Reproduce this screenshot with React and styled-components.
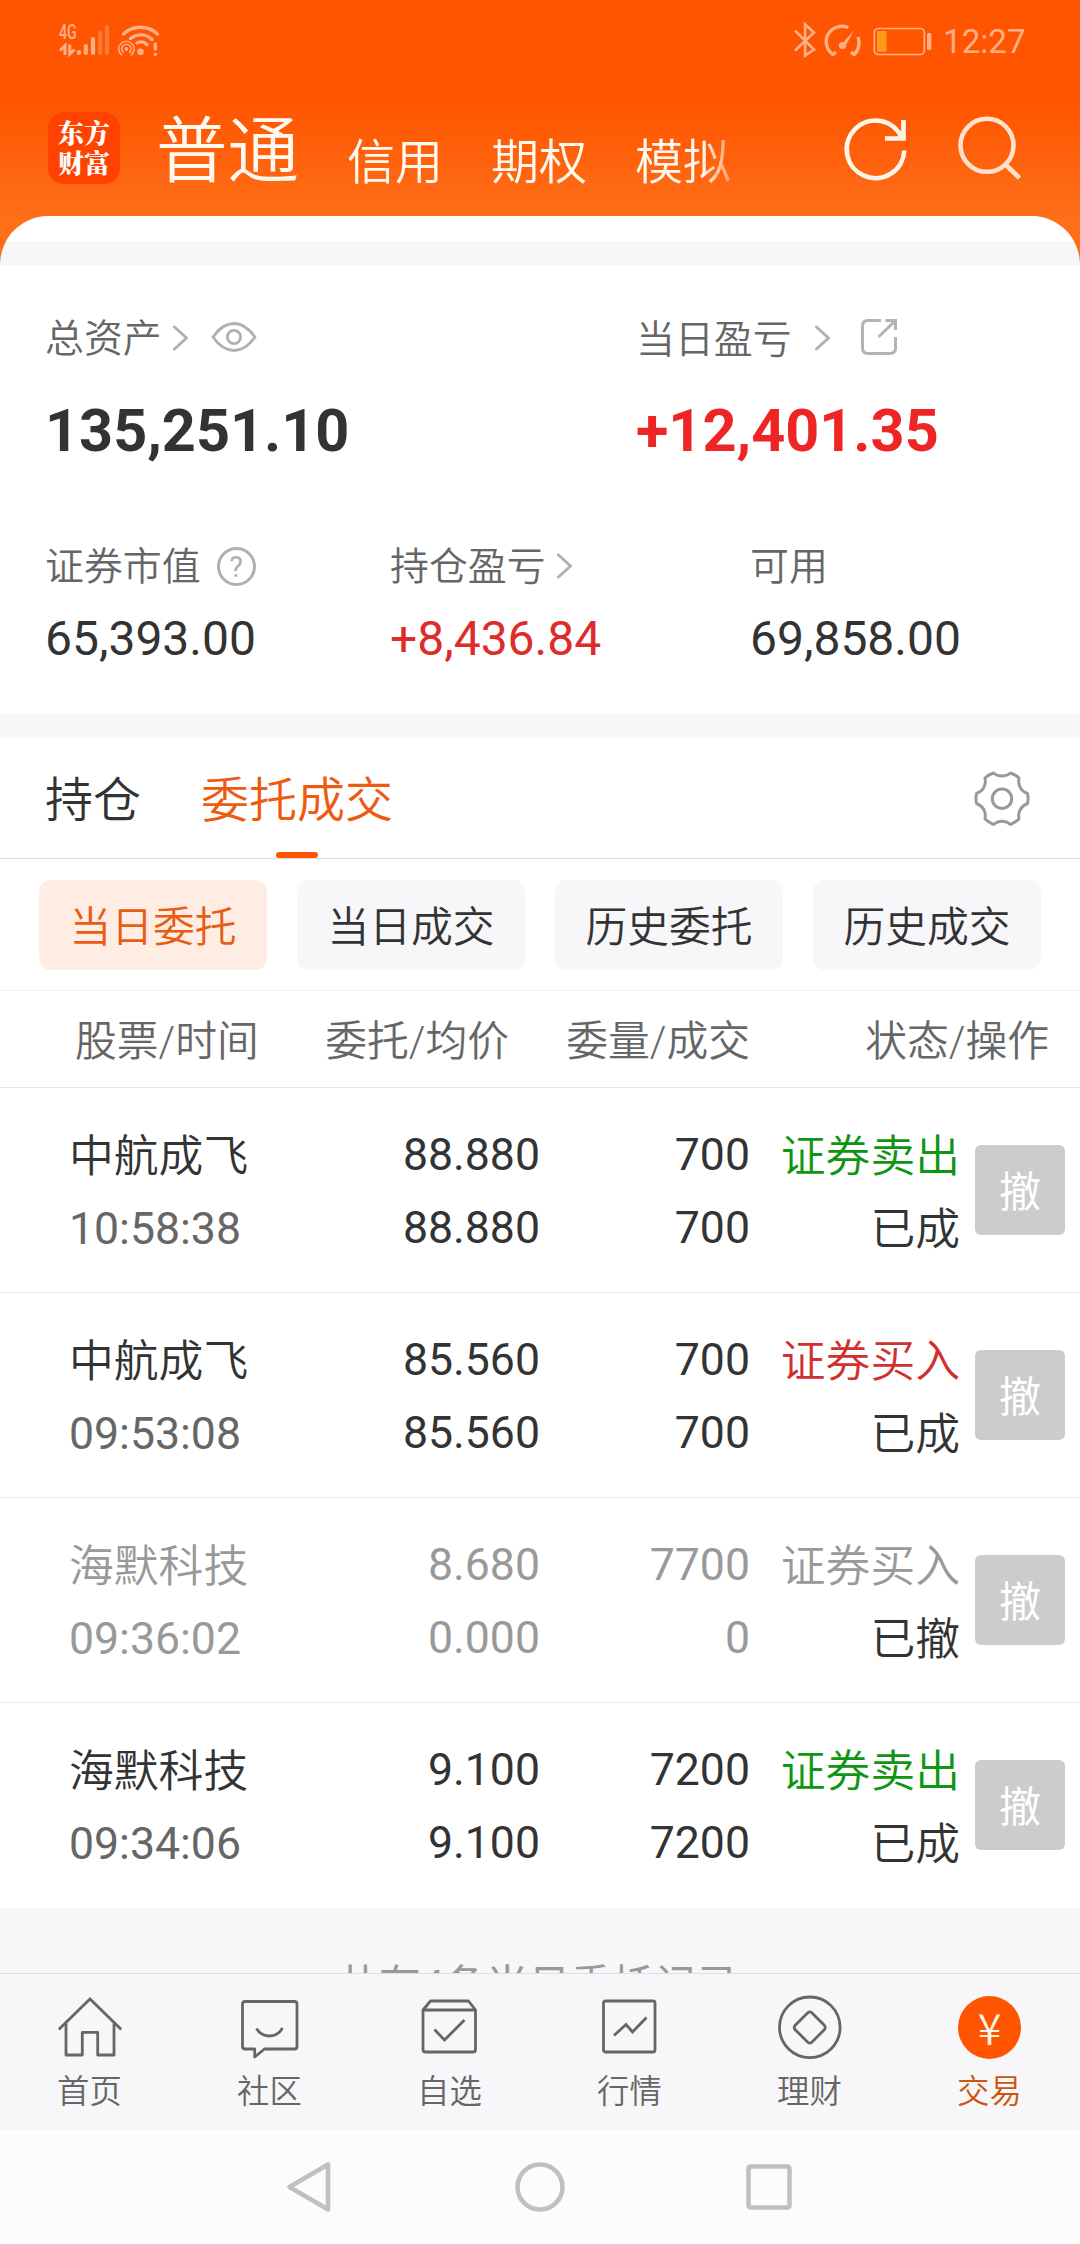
import React from "react";
import styled, { createGlobalStyle } from "styled-components";

const Global = createGlobalStyle`
  * { box-sizing: border-box; }
  body { margin: 0; background: #fff; }
  svg { display: block; flex: none; }
`;

const Screen = styled.div`
  width: 1080px;
  height: 2244px;
  display: flex;
  flex-direction: column;
  overflow: hidden;
  background: linear-gradient(#ff5500 100px, #ff6f1a 220px);
  font-family: Roboto, "Noto Sans CJK SC", sans-serif;
  color: #333;
  white-space: nowrap;
`;

const StatusBar = styled.div`
  height: 80px;
  flex: none;
  display: flex;
  align-items: flex-start;
  justify-content: space-between;
  padding: 20px 55px 0 56px;
  color: #ffb088;
`;
const StatusSide = styled.div`
  display: flex;
  align-items: flex-start;
`;
const Network = styled.span`
  width: 0;
  font-size: 21px;
  font-weight: 500;
  line-height: 24px;
  transform: translate(3px, 0) scaleX(0.68);
  transform-origin: 0 50%;
`;
const Clock = styled.span`
  width: 82px;
  margin-left: 10px;
  font-size: 33.2px;
  line-height: 43px;
`;

const Header = styled.header`
  height: 136px;
  flex: none;
  display: flex;
  align-items: flex-start;
  padding: 32px 57px 0 48px;
  color: #fff9f0;
`;
const Logo = styled.div`
  width: 72px;
  height: 72px;
  display: flex;
  flex-direction: column;
  align-items: center;
  gap: 4px;
  padding-top: 7px;
  border-radius: 16px;
  background: #ff4200;
  color: #fff;
  font-family: "Noto Serif CJK SC", "Noto Sans CJK SC", sans-serif;
  font-size: 26px;
  font-weight: 900;
  line-height: 26px;
`;
const AccountTabs = styled.nav`
  width: 596px;
  height: 82px;
  margin-left: 36px;
  display: flex;
  align-items: flex-end;
  gap: 48px;
  mask-image: linear-gradient(90deg, #000 546px, transparent 592px);
`;
const AccountTab = styled.span`
  font-size: ${(p) => (p.$active ? 71.5 : 48)}px;
  line-height: ${(p) => (p.$active ? 84 : 62)}px;
  font-weight: 350;
`;
const HeaderIcons = styled.div`
  display: flex;
  gap: 48px;
  margin: 3px 0 0 auto;
`;

const Sheet = styled.main`
  flex: 1;
  min-height: 0;
  overflow: hidden;
  border-radius: 49px 49px 0 0;
  background: #f7f7fa;
`;
const SheetTop = styled.div`
  height: 25px;
  background: #fff;
`;
const Summary = styled.section`
  height: 449px;
  margin-top: 24px;
  background: #fff;
  padding: 46px 45px 0 45px;
`;
const SummaryRow = styled.div`
  display: grid;
  grid-template-columns: ${(p) => p.$cols};
  height: ${(p) => p.$h}px;
`;
const Label = styled.div`
  display: flex;
  align-items: center;
  height: 54px;
  gap: ${(p) => p.$gap || 0}px;
  font-size: 38.9px;
  font-weight: 350;
  line-height: 54px;
  color: #666;
`;
const Caption = styled.span`
  padding-top: ${(p) => p.$drop || 2}px;
`;
const Amount = styled.div`
  font-size: ${(p) => (p.$big ? 59.4 : 48)}px;
  font-weight: ${(p) => (p.$big ? 700 : 400)};
  line-height: ${(p) => (p.$big ? 72 : 60)}px;
  margin-top: ${(p) => (p.$big ? 30 : 16)}px;
  color: ${(p) => (p.$gain ? (p.$big ? "#ee2525" : "#dc2c2c") : "#333")};
`;

const Orders = styled.section`
  margin-top: 24px;
  background: #fff;
`;
const Tabs = styled.div`
  height: 121px;
  display: flex;
  gap: 60px;
  padding: 0 50px 0 45px;
  border-bottom: 1px solid #dcdcdc;
`;
const Tab = styled.div`
  display: flex;
  flex-direction: column;
  align-items: center;
  justify-content: space-between;
  padding-top: 27px;
  font-size: 48px;
  font-weight: 350;
  line-height: 72px;
  color: ${(p) => (p.$active ? "#ee5a0e" : "#333")};
  &::after {
    content: "";
    width: 42px;
    height: 6px;
    border-radius: 3px;
    background: ${(p) => (p.$active ? "#ff5500" : "transparent")};
  }
`;
const Settings = styled.div`
  margin: 33px 0 0 auto;
`;
const Chips = styled.div`
  height: 132px;
  display: flex;
  gap: 30px;
  padding: 21px 39px 0;
  border-bottom: 1px solid #f4f4f6;
`;
const Chip = styled.div`
  flex: 1;
  height: 90px;
  border-radius: 12px;
  background: ${(p) => (p.$active ? "#ffede4" : "#f7f7fa")};
  color: ${(p) => (p.$active ? "#e85c14" : "#333")};
  font-size: 41.8px;
  font-weight: 350;
  line-height: 95px;
  text-align: center;
`;
const Columns = styled.div`
  height: 97px;
  display: grid;
  grid-template-columns: 434px 241px 299px;
  padding-left: 75px;
  border-bottom: 1px solid #e8e8e8;
  font-size: 41.8px;
  font-weight: 350;
  line-height: 101px;
  color: #666;
  justify-content: start;
`;
const Head = styled.span`
  text-align: right;
`;
const HeadPair = styled.div`
  display: flex;
  justify-content: space-between;
`;
const Row = styled.div`
  height: 205px;
  display: grid;
  grid-template-columns: 231px 240px 210px 210px 90px;
  align-items: center;
  padding: 0 15px 0 69px;
  border-bottom: 1px solid #ebebeb;
  &:last-child { border-bottom-color: #fff; }
`;
const Cell = styled.div`
  display: flex;
  flex-direction: column;
  align-items: ${(p) => (p.$left ? "flex-start" : "flex-end")};
  font-size: 44.8px;
  line-height: 73px;
  padding-top: 6px;
  color: ${(p) => (p.$muted ? "#999" : "#333")};
`;
const Figures = styled(Cell)`
  font-size: 44.6px;
  padding-top: 4px;
`;
const Name = styled.span`
  font-weight: 350;
`;
const Time = styled.span`
  font-size: 44.6px;
  color: ${(p) => (p.$muted ? "#999" : "#666")};
`;
const sideColors = { sell: "#109510", buy: "#d13030", muted: "#999" };
const Side = styled.span`
  font-weight: 350;
  color: ${(p) => sideColors[p.$kind]};
`;
const State = styled.span`
  font-weight: 350;
  color: #333;
`;
const Revoke = styled.div`
  width: 90px;
  height: 90px;
  margin-left: 15px;
  border-radius: 6px;
  background: #ccc;
  color: #fff;
  font-size: 42px;
  line-height: 95px;
  text-align: center;
`;
const Footnote = styled.div`
  padding: 48px 5px 0 0;
  font-size: 42px;
  line-height: 60px;
  font-weight: 400;
  color: #999;
  text-align: center;
`;

const BottomBar = styled.nav`
  flex: none;
  height: 157px;
  display: grid;
  grid-template-columns: repeat(6, 1fr);
  border-top: 1px solid #e0e0e2;
  background: #f7f7fa;
`;
const BottomItem = styled.div`
  display: flex;
  flex-direction: column;
  align-items: center;
  padding: 21px 1px 0 0;
  font-size: 32.4px;
  font-weight: 350;
  line-height: 48px;
  gap: 9px;
  color: ${(p) => (p.$active ? "#cf5412" : "#666")};
`;
const Yen = styled.div`
  width: 63px;
  height: 63px;
  margin: 1px 0 0;
  border-radius: 50%;
  background: #ff5500;
  color: #fff3ea;
  font-family: "Noto Sans CJK SC", sans-serif;
  font-size: 43px;
  font-weight: 350;
  line-height: 60px;
  text-align: center;
`;
const SystemNav = styled.div`
  flex: none;
  height: 114px;
  display: flex;
  gap: 182px;
  padding: 31px 0 0 280px;
  background: #fcfcfc;
`;
const NavIcon = styled.svg.attrs({ width: 52, height: 52, viewBox: "0 0 52 52" })`
  fill: none;
  stroke: #c0c0c0;
  stroke-width: 4.6px;
  stroke-linejoin: round;
  margin-left: ${(p) => p.$nudge || 0}px;
`;

const SignalIcon = () => (
  <svg width="108" height="40" viewBox="0 0 108 40" fill="none" stroke="#ffb088" strokeWidth="4.2" strokeLinecap="round">
    <path d="M23 32v1M29.800 26v7M37 19v14" />
    <path d="M44.200 13v20M51 7v26" stroke="#ff7a38" />
    <g strokeWidth="3" strokeLinecap="butt">
      <path d="M9 35V25.500L4 30.500M13.800 24.500V34L18.500 29.500" />
    </g>
    <g strokeWidth="3.400">
      <path d="M67.500 14C77 5 92 5 101.500 14" />
      <path d="M74.500 18.500C81 13.500 90 13.500 96 19.500" />
      <path d="M81 23C85 21 88.500 22 91 24.700" />
    </g>
    <circle cx="84.500" cy="31.700" r="3.200" fill="#ffb088" stroke="none" />
    <path d="M99.300 24v5M99.300 34.400v.1" strokeWidth="3.400" />
    <circle cx="70.400" cy="29" r="2" fill="#ffb088" stroke="none" />
    <g strokeWidth="1.500">
      <path d="M67.200 32.400A4.700 4.700 0 1 1 73.600 32.400" />
      <path d="M65.600 35A7.700 7.700 0 1 1 75.200 35" />
    </g>
  </svg>
);
const StatusIcons = () => (
  <svg width="140" height="40" viewBox="0 0 140 40" fill="none" stroke="#ffb088" strokeWidth="2.600">
    <path d="M2 10.500L21 29.500L12.100 35.500V4.500L21 12.500L2 30.500" />
    <g strokeWidth="3.400">
      <path d="M43 32L40 34.500C33.500 30.500 31.500 21 35 14.500C39 7.500 47 4.500 55.500 7.500" />
      <path d="M65.200 17C67.500 24 65 31.500 61 34.500L58 32" />
    </g>
    <circle cx="49.500" cy="25.500" r="3.600" fill="#ffb088" stroke="none" />
    <path d="M48.500 24.500L61.500 9.500L52 27z" fill="#ffb088" stroke="none" />
    <rect x="81.300" y="8.500" width="50" height="26" rx="4" strokeWidth="1.700" />
    <rect x="84" y="11" width="9.600" height="20.800" rx="1" fill="#ff9b19" stroke="none" />
    <rect x="134" y="13" width="4.300" height="17" rx="1.500" fill="#ffb088" stroke="none" />
  </svg>
);
const RefreshIcon = () => (
  <svg width="66" height="66" viewBox="0 0 66 66" fill="none" stroke="#fff6ea" strokeWidth="4.600">
    <path d="M61.300 35.500A28.800 28.800 0 1 1 59 23" />
    <path d="M60.500 5V23.500H42" />
  </svg>
);
const SearchIcon = () => (
  <svg width="66" height="66" viewBox="0 0 66 66" fill="none" stroke="#ffe2cc" strokeWidth="4.600">
    <circle cx="30" cy="30.300" r="26.500" />
    <path d="M48.500 49.500L62.500 63" />
  </svg>
);
const Chevron = () => (
  <svg width="16" height="26" viewBox="1 0 16 26" fill="none" stroke="#b0b0b0" strokeWidth="3" strokeLinecap="round" strokeLinejoin="round">
    <path d="M2.500 2L14.500 13L2.500 24" />
  </svg>
);
const EyeIcon = () => (
  <svg width="46" height="34" viewBox="0 1 46 34" fill="none" stroke="#b0b0b0" strokeWidth="2.800">
    <path d="M2 17C9 7 16 3.500 23 3.500S37 7 44 17C37 27 30 30.500 23 30.500S9 27 2 17z" strokeLinejoin="round" />
    <circle cx="23" cy="17" r="6.600" />
  </svg>
);
const ShareIcon = () => (
  <svg width="44" height="38" viewBox="-6 1 44 38" fill="none" stroke="#b3b3b3" strokeWidth="3">
    <path d="M21 2.500H8Q2.500 2.500 2.500 8V30Q2.500 35.500 8 35.500H30Q35.500 35.500 35.500 30V19" />
    <path d="M18.500 19L35 3M25.500 2.500H35.500V12" />
  </svg>
);
const HelpRing = styled.span`
  width: 39px;
  height: 39px;
  border: 3px solid #b0b0b0;
  border-radius: 50%;
  color: #b0b0b0;
  font-size: 29px;
  font-weight: 400;
  line-height: 35px;
  text-align: center;
`;
const GearIcon = () => (
  <svg width="56" height="56" viewBox="0 0 56 56" fill="none" stroke="#999" strokeWidth="3" strokeLinejoin="round">
    <path d="M19.500 2C24 6 32 6 36.500 2C39.500 3 42.500 4.500 45 7C43.500 14 47 20.500 53.500 22.500C54.300 26 54.300 29 53.500 32.500C47 35 43.500 41 45 48C42.500 50.500 39.500 52 36.500 53.500C32 49 24 49 19.500 53.500C16.500 52 13.500 50.500 11 48C12.500 41 9 35 2.500 32.500C1.700 29 1.700 26 2.500 22.500C9 20.500 12.500 14 11 7C13.500 4.500 16.500 3 19.500 2z" />
    <circle cx="28" cy="27.700" r="9.700" />
  </svg>
);

const icons = {
  home: (
    <>
      <path d="M.8 34.500L32 4L63.200 34.500" />
      <path d="M8 28.500V60H24.300V37.300H39.700V60H56V28.500" strokeLinejoin="round" />
    </>
  ),
  chat: (
    <>
      <path d="M7 6.500H56.500Q59 6.500 59 9V51.500Q59 54 56.500 54H26.500L16.700 62V54H7Q4.500 54 4.500 51.500V9Q4.500 6.500 7 6.500z" strokeLinejoin="round" />
      <path d="M18.500 33.500Q23 41 31.500 41T44.500 33" />
    </>
  ),
  picks: (
    <>
      <path d="M5 15L12.500 6H50.500L57.500 15V54.500Q57.500 57 55 57H7.500Q5 57 5 54.500zM5 15H57.500" strokeLinejoin="round" />
      <path d="M16.500 34.500L26.500 45L46.500 25" />
    </>
  ),
  quotes: (
    <>
      <rect x="5.500" y="6" width="51.500" height="51" rx="2" />
      <path d="M16 40.500L28 29.500L34.500 37L48.500 22.500" />
    </>
  ),
  wealth: (
    <>
      <circle cx="31.800" cy="32.300" r="30.300" />
      <path d="M29.800 17.800Q31.800 16 33.800 17.800L46.500 30.500Q48 32.500 46.500 34.500L33.800 47.200Q31.800 49 29.800 47.200L17 34.500Q15.500 32.500 17 30.500z" />
    </>
  ),
};
const BarIcon = ({ name }) => (
  <svg width="64" height="64" viewBox="0 0 64 64" fill="none" stroke="#666" strokeWidth="2.800">
    {icons[name]}
  </svg>
);

const orders = [
  { name: "中航成飞", time: "10:58:38", price: "88.880", avg: "88.880", qty: "700", done: "700", side: "证券卖出", kind: "sell", state: "已成" },
  { name: "中航成飞", time: "09:53:08", price: "85.560", avg: "85.560", qty: "700", done: "700", side: "证券买入", kind: "buy", state: "已成" },
  { name: "海默科技", time: "09:36:02", price: "8.680", avg: "0.000", qty: "7700", done: "0", side: "证券买入", kind: "muted", state: "已撤" },
  { name: "海默科技", time: "09:34:06", price: "9.100", avg: "9.100", qty: "7200", done: "7200", side: "证券卖出", kind: "sell", state: "已成" },
];
const bottomItems = [
  ["首页", "home"],
  ["社区", "chat"],
  ["自选", "picks"],
  ["行情", "quotes"],
  ["理财", "wealth"],
];

export default function App() {
  return (
    <Screen>
      <Global />
      <StatusBar>
        <StatusSide>
          <Network>4G</Network>
          <SignalIcon />
        </StatusSide>
        <StatusSide>
          <StatusIcons />
          <Clock>12:27</Clock>
        </StatusSide>
      </StatusBar>
      <Header>
        <Logo>
          <span>东方</span>
          <span>财富</span>
        </Logo>
        <AccountTabs>
          <AccountTab $active>普通</AccountTab>
          <AccountTab>信用</AccountTab>
          <AccountTab>期权</AccountTab>
          <AccountTab>模拟</AccountTab>
        </AccountTabs>
        <HeaderIcons>
          <RefreshIcon />
          <SearchIcon />
        </HeaderIcons>
      </Header>
      <Sheet>
        <SheetTop />
        <Summary>
          <SummaryRow $cols="591px 1fr" $h={228}>
            <div>
              <Label $gap={11}><Caption>总资产</Caption><Chevron /><span /><EyeIcon /></Label>
              <Amount $big>135,251.10</Amount>
            </div>
            <div>
              <Label $gap={23}><Caption $drop={4}>当日盈亏</Caption><Chevron /><ShareIcon /></Label>
              <Amount $big $gain>+12,401.35</Amount>
            </div>
          </SummaryRow>
          <SummaryRow $cols="345px 360px 1fr" $h={150}>
            <div>
              <Label $gap={16}><Caption>证券市值</Caption><HelpRing>?</HelpRing></Label>
              <Amount>65,393.00</Amount>
            </div>
            <div>
              <Label $gap={11}><Caption>持仓盈亏</Caption><Chevron /></Label>
              <Amount $gain>+8,436.84</Amount>
            </div>
            <div>
              <Label><Caption>可用</Caption></Label>
              <Amount>69,858.00</Amount>
            </div>
          </SummaryRow>
        </Summary>
        <Orders>
          <Tabs>
            <Tab>持仓</Tab>
            <Tab $active>委托成交</Tab>
            <Settings><GearIcon /></Settings>
          </Tabs>
          <Chips>
            <Chip $active>当日委托</Chip>
            <Chip>当日成交</Chip>
            <Chip>历史委托</Chip>
            <Chip>历史成交</Chip>
          </Chips>
          <Columns>
            <HeadPair>
              <span>股票/时间</span>
              <span>委托/均价</span>
            </HeadPair>
            <Head>委量/成交</Head>
            <Head>状态/操作</Head>
          </Columns>
          {orders.map((o) => {
            const muted = o.kind === "muted";
            return (
              <Row key={o.time}>
                <Cell $left $muted={muted}>
                  <Name>{o.name}</Name>
                  <Time $muted={muted}>{o.time}</Time>
                </Cell>
                <Figures $muted={muted}>
                  <span>{o.price}</span>
                  <span>{o.avg}</span>
                </Figures>
                <Figures $muted={muted}>
                  <span>{o.qty}</span>
                  <span>{o.done}</span>
                </Figures>
                <Cell>
                  <Side $kind={o.kind}>{o.side}</Side>
                  <State>{o.state}</State>
                </Cell>
                <Revoke>撤</Revoke>
              </Row>
            );
          })}
        </Orders>
        <Footnote>共有4条当日委托记录</Footnote>
      </Sheet>
      <BottomBar>
        {bottomItems.map(([label, icon]) => (
          <BottomItem key={icon}>
            <BarIcon name={icon} />
            {label}
          </BottomItem>
        ))}
        <BottomItem $active>
          <Yen>¥</Yen>
          交易
        </BottomItem>
      </BottomBar>
      <SystemNav>
        <NavIcon>
          <path d="M48 3.500V48.500L9.500 26z" />
        </NavIcon>
        <NavIcon>
          <circle cx="26" cy="26" r="22.500" />
        </NavIcon>
        <NavIcon $nudge={-5}>
          <rect x="5.500" y="5.500" width="41" height="41" rx="2" />
        </NavIcon>
      </SystemNav>
    </Screen>
  );
}
